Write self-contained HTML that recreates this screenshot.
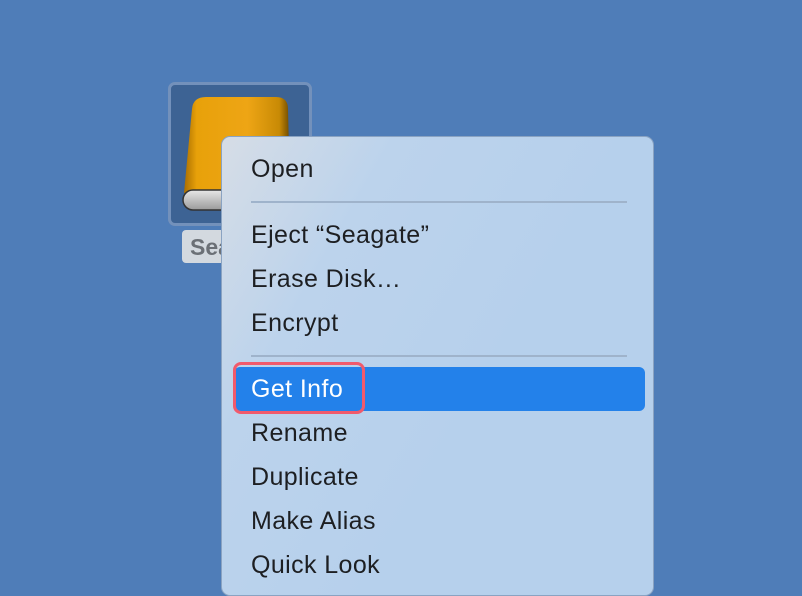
<!DOCTYPE html><html><head><style>
body{margin:0;width:802px;height:568px;background:#4f7db8;position:relative;overflow:hidden;font-family:"Liberation Sans",sans-serif}
.sel{position:absolute;left:168px;top:82px;width:138px;height:138px;border:3px solid #7391bb;border-radius:7px;background:#3d6394}
.lab{position:absolute;left:182px;top:230px;width:60px;height:33px;background:#d3d9df;border-radius:4px;color:#6b7076;font-weight:bold;font-size:23px;line-height:34px;padding-left:8px;box-sizing:border-box}
.menu{position:absolute;left:221px;top:136px;width:433px;height:460px;border-radius:9px;background:linear-gradient(120deg,#d6dde6 0%,#bcd3ec 25%,#b6d0ec 60%);border:1px solid #8aa3c2;box-sizing:border-box}
.it{position:absolute;left:29px;font-size:25px;letter-spacing:0.4px;color:#1d1f22;line-height:30px}
.sep{position:absolute;left:29px;width:376px;height:2px;background:#9fb3cb}
.hl{position:absolute;left:12px;top:230px;width:411px;height:44px;background:#2381ea;border-radius:6px}
.red{position:absolute;left:11px;top:225px;width:132px;height:52px;border:3px solid #f15a6c;border-radius:8px;box-sizing:border-box}
</style></head><body>
<div class="sel"></div>
<svg style="position:absolute;left:180px;top:95px" width="115" height="118" viewBox="0 0 115 118">
<defs><linearGradient id="g" x1="0" x2="1"><stop offset="0" stop-color="#a86d00"/><stop offset=".12" stop-color="#e8a10a"/><stop offset=".6" stop-color="#eea515"/><stop offset=".9" stop-color="#c88a05"/><stop offset="1" stop-color="#6b4800"/></linearGradient>
<linearGradient id="b" x1="0" y1="0" x2="0" y2="1"><stop offset="0" stop-color="#e8e8e8"/><stop offset="1" stop-color="#9a9a9a"/></linearGradient></defs>
<path d="M12 14 Q13 2 26 2 L96 2 Q108 2 108 14 L110 98 L4 98 Z" fill="url(#g)"/>
<rect x="3" y="95" width="108" height="20" rx="10" fill="url(#b)" stroke="#333" stroke-width="1.5"/>
</svg>
<div class="lab">Sea</div>
<div class="menu">
<div class="it" style="top:17px">Open</div>
<div class="sep" style="top:64px"></div>
<div class="it" style="top:83px">Eject “Seagate”</div>
<div class="it" style="top:127px">Erase Disk…</div>
<div class="it" style="top:171px">Encrypt</div>
<div class="sep" style="top:218px"></div>
<div class="hl"></div>
<div class="red"></div>
<div class="it" style="top:237px;color:#fff">Get Info</div>
<div class="it" style="top:281px">Rename</div>
<div class="it" style="top:325px">Duplicate</div>
<div class="it" style="top:369px">Make Alias</div>
<div class="it" style="top:413px">Quick Look</div>
</div>
</body></html>
